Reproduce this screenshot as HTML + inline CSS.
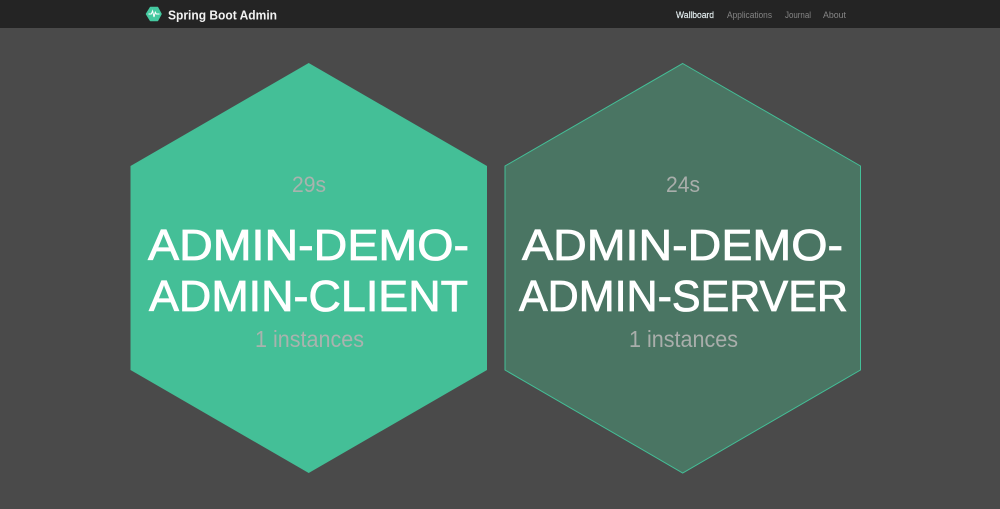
<!DOCTYPE html>
<html>
<head>
<meta charset="utf-8">
<style>
html,body{margin:0;padding:0;width:1000px;height:509px;overflow:hidden;background:#4a4a4a}
svg{display:block;position:absolute;left:0;top:0}
text{font-family:"Liberation Sans",sans-serif}
</style>
</head>
<body>
<svg width="1000" height="509" viewBox="0 0 1000 509" xmlns="http://www.w3.org/2000/svg">
<rect width="1000" height="509" fill="#4a4a4a"/>
<rect width="1000" height="28" fill="#242424"/>
<polygon points="146.5,14 150.5,7.5 157.5,7.5 161,14 157.5,20.5 150.5,20.5" fill="#45c9a0" stroke="#45c9a0" stroke-width="1.5" stroke-linejoin="round"/>
<path d="M148.5 14H151.3L152.6 11L154 17L155.3 12.2L156.3 14H159.5" fill="none" stroke="#fff" stroke-width="1"/>
<text x="168" y="19.5" font-size="13" font-weight="700" fill="#f2f2f2" textLength="109" lengthAdjust="spacingAndGlyphs">Spring Boot Admin</text>
<text x="676" y="18" font-size="9" fill="#e6f0f2" stroke="#e6f0f2" stroke-width="0.15" textLength="38" lengthAdjust="spacingAndGlyphs">Wallboard</text>
<text x="727" y="18" font-size="9" fill="#858585" textLength="45" lengthAdjust="spacingAndGlyphs">Applications</text>
<text x="785" y="18" font-size="9" fill="#858585" textLength="26" lengthAdjust="spacingAndGlyphs">Journal</text>
<text x="823" y="18" font-size="9" fill="#858585" textLength="23" lengthAdjust="spacingAndGlyphs">About</text>

<polygon points="308.7,63 487,166 487,370 308.7,473 130.5,370 130.5,166" fill="#44bf97"/>
<polygon points="682.7,63.5 860.5,166 860.5,370 682.7,473 505,370 505,166" fill="#4a7563" stroke="#44bf97" stroke-width="1"/>

<text x="292" y="192" font-size="22" fill="#a9b3ae" textLength="34" lengthAdjust="spacingAndGlyphs">29s</text>
<text x="148" y="260" font-size="44" fill="#fff" stroke="#fff" stroke-width="0.8" textLength="321" lengthAdjust="spacingAndGlyphs">ADMIN-DEMO-</text>
<text x="149" y="311" font-size="44" fill="#fff" stroke="#fff" stroke-width="0.8" textLength="319" lengthAdjust="spacingAndGlyphs">ADMIN-CLIENT</text>
<text x="255" y="347" font-size="23" fill="#a9b3ae" textLength="109" lengthAdjust="spacingAndGlyphs">1 instances</text>

<text x="666" y="192" font-size="22" fill="#a9aeab" textLength="34" lengthAdjust="spacingAndGlyphs">24s</text>
<text x="522" y="260" font-size="44" fill="#fff" stroke="#fff" stroke-width="0.8" textLength="321" lengthAdjust="spacingAndGlyphs">ADMIN-DEMO-</text>
<text x="519" y="311" font-size="44" fill="#fff" stroke="#fff" stroke-width="0.8" textLength="329" lengthAdjust="spacingAndGlyphs">ADMIN-SERVER</text>
<text x="629" y="347" font-size="23" fill="#a9aeab" textLength="109" lengthAdjust="spacingAndGlyphs">1 instances</text>
</svg>
</body>
</html>
